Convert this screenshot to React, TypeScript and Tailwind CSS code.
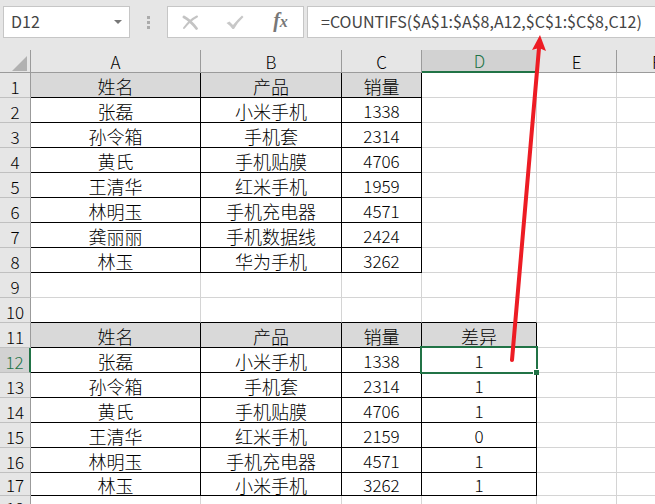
import { clsx } from "clsx";

const columns = [
  { name: "A", width: "w-[170px]" },
  { name: "B", width: "w-[141px]" },
  { name: "C", width: "w-[80px]" },
  { name: "D", width: "w-[115px]" },
  { name: "E", width: "w-[80px]" },
  { name: "F", width: "w-[80px]" },
];

const sheet: string[][] = [
  ["姓名", "产品", "销量"],
  ["张磊", "小米手机", "1338"],
  ["孙令箱", "手机套", "2314"],
  ["黄氏", "手机贴膜", "4706"],
  ["王清华", "红米手机", "1959"],
  ["林明玉", "手机充电器", "4571"],
  ["龚丽丽", "手机数据线", "2424"],
  ["林玉", "华为手机", "3262"],
  [],
  [],
  ["姓名", "产品", "销量", "差异"],
  ["张磊", "小米手机", "1338", "1"],
  ["孙令箱", "手机套", "2314", "1"],
  ["黄氏", "手机贴膜", "4706", "1"],
  ["王清华", "红米手机", "2159", "0"],
  ["林明玉", "手机充电器", "4571", "1"],
  ["林玉", "小米手机", "3262", "1"],
  [],
];

const ACTIVE_ROW = 12;
const ACTIVE_COL = 3;

const filled = (row: number, col: number) => Boolean(sheet[row]?.[col]);

function Selection() {
  return (
    <span className="pointer-events-none absolute -inset-[2px] z-10 border-2 border-[#217346]">
      <span className="absolute -right-[3px] -bottom-[3px] box-content size-[5px] border-t border-l border-white bg-[#217346]" />
    </span>
  );
}

function FormulaBar() {
  return (
    <div className="flex h-[50px] items-start pt-[6px] pl-[3px] font-['Noto_Sans_CJK_SC',sans-serif] text-base text-[#444]">
      <div className="flex h-8 w-[127px] shrink-0 items-center border border-[#c6c6c6] bg-white">
        <input
          aria-label="Name box"
          defaultValue="D12"
          className="h-full min-w-0 flex-1 bg-transparent pb-[2px] pl-[7px] outline-none"
        />
        <button aria-label="Show names" className="flex h-full w-[22px] items-center justify-center">
          <svg width="8" height="4" viewBox="0 0 8 4">
            <path d="M0 0h8L4 4z" fill="#777" />
          </svg>
        </button>
      </div>
      <div className="flex h-8 w-[37px] shrink-0 flex-col items-center justify-center gap-[2px]">
        <i className="size-[3px] bg-[#ababab]" />
        <i className="size-[3px] bg-[#ababab]" />
        <i className="size-[3px] bg-[#ababab]" />
      </div>
      <div className="flex h-8 w-[137px] shrink-0 items-center border border-[#c6c6c6] bg-white">
        <button aria-label="Cancel" className="flex h-full w-[44px] items-center justify-center">
          <svg width="17" height="15" viewBox="0 0 17 15" fill="none" stroke="#c4c4c4" strokeLinecap="round">
            <path d="M2 2C6 4 11 9 14.500 13.500" strokeWidth="2.800" />
            <path d="M15 1.500C10 4 5 9 2 13" strokeWidth="2" />
          </svg>
        </button>
        <button aria-label="Enter" className="flex h-full w-[46px] items-center justify-center">
          <svg width="18" height="15" viewBox="0 0 18 15">
            <path d="M.5 8L3.500 6.500L7 10Q11 5 16 .5L17.500 2Q12 7 8 14H6.500Q4 10.500 .5 8z" fill="#c8c8c8" />
          </svg>
        </button>
        <button
          aria-label="Insert function"
          className="flex h-full w-[45px] items-center justify-center font-['Liberation_Serif',serif] text-xl leading-none font-bold text-[#777] italic"
        >
          <span className="pb-1">f</span>
          <span className="text-base leading-none">x</span>
        </button>
      </div>
      <input
        aria-label="Formula"
        defaultValue="=COUNTIFS($A$1:$A$8,A12,$C$1:$C$8,C12)"
        className="ml-[3px] h-8 min-w-0 flex-1 border border-r-0 border-[#c6c6c6] bg-white pb-[2px] pl-[13px] outline-none"
      />
    </div>
  );
}

function Grid() {
  return (
    <table className="w-[697px] table-fixed border-separate border-spacing-0 text-center text-black">
      <thead>
        <tr className="h-[23px]">
          <th className="w-[31px] border-r border-b border-[#9b9b9b] p-0" aria-label="Select all">
            <svg className="mt-1 ml-3" width="15" height="15" viewBox="0 0 15 15">
              <path d="M15 0v15H0z" fill="#b1b1b1" />
            </svg>
          </th>
          {columns.map((c, i) => (
            <th
              key={c.name}
              scope="col"
              className={clsx(
                "p-0 pt-px text-[17px] leading-5 font-light",
                c.width,
                i === ACTIVE_COL
                  ? "border-b-2 border-[#217346] bg-[#d2d2d2] text-[#217346]"
                  : "border-r border-b border-[#9b9b9b]",
              )}
            >
              {c.name}
            </th>
          ))}
        </tr>
      </thead>
      <tbody>
        {sheet.map((row, r) => {
          const number = r + 1;
          const current = number === ACTIVE_ROW;
          const heading = r === 0 || r === 10;
          return (
            <tr key={number} className={number >= 17 ? "h-[23px]" : "h-[25px]"}>
              <th
                scope="row"
                className={clsx(
                  "border-b border-b-[#c0c0c0] p-0 align-bottom text-[17px] leading-5 font-light",
                  current
                    ? "border-r-2 border-r-[#217346] bg-[#d2d2d2] text-[#217346]"
                    : "border-r border-r-[#9b9b9b]",
                )}
              >
                {number}
              </th>
              {columns.map((c, col) => {
                const right = filled(r, col) || filled(r, col + 1) || (col === 2 && r < 8);
                const bottom = filled(r, col) || filled(r + 1, col);
                return (
                  <td
                    key={c.name}
                    className={clsx(
                      "relative border-r border-b p-0 pt-px font-light whitespace-nowrap",
                      right ? "border-r-black" : "border-r-[#d4d4d4]",
                      bottom ? "border-b-black" : "border-b-[#d4d4d4]",
                      heading && filled(r, col) ? "bg-[#d9d9d9]" : "bg-white",
                      col < 2 || heading ? "text-lg leading-5" : "text-[17px] leading-5",
                    )}
                  >
                    {row[col]}
                    {current && col === ACTIVE_COL && <Selection />}
                  </td>
                );
              })}
            </tr>
          );
        })}
      </tbody>
    </table>
  );
}

export default function App() {
  return (
    <main className="relative h-screen overflow-hidden bg-[#e6e6e6] font-['Noto_Sans_CJK_SC',sans-serif] text-base">
      <FormulaBar />
      <Grid />
      <svg
        className="pointer-events-none absolute top-[34px] left-[505px] z-20"
        width="44"
        height="332"
        viewBox="0 0 44 332"
        aria-hidden="true"
      >
        <path d="M7 326L34 14" stroke="#ed1c24" strokeWidth="4" strokeLinecap="round" />
        <path d="M35 1L27 16L34 14L41 17z" fill="#ed1c24" />
      </svg>
    </main>
  );
}
